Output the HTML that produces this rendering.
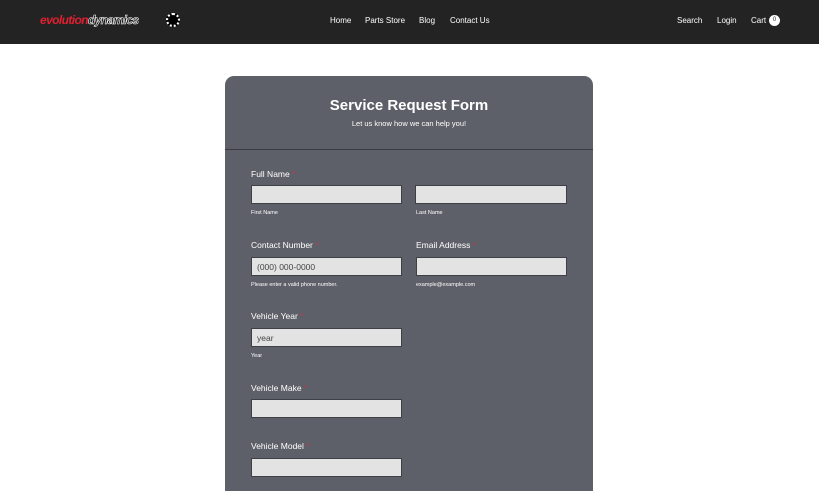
<!DOCTYPE html>
<html><head><style>
*{margin:0;padding:0;box-sizing:border-box}
html,body{width:819px;height:491px;overflow:hidden}
body{background:#fff;font-family:"Liberation Sans",sans-serif;position:relative}
.hdr{position:absolute;left:0;top:0;width:819px;height:44px;background:#232323}
.t{position:absolute;color:#fff;font-size:8px;white-space:nowrap}
.card{position:absolute;left:225px;top:76px;width:368px;height:415px;background:#5e6069;border-radius:9px 9px 0 0}
.line{position:absolute;left:225px;top:149px;width:368px;height:1px;background:#3a3b40}
.lab{position:absolute;color:#fff;font-size:8.5px}
.lab b{color:#c0394f;font-weight:normal}
.in{position:absolute;height:19px;background:#e3e3e3;border:1px solid #3f4046;font-size:8.5px;color:#444;padding:4px 5px}
.sub{position:absolute;color:#fff;font-size:5.5px}
</style></head><body>
<div class="hdr"></div>
<div class="t" style="left:40px;top:13px;font-size:12px;font-style:italic;font-weight:bold;letter-spacing:-0.6px"><span style="color:#e02030">evolution</span><span style="color:#111;-webkit-text-stroke:0.6px #fff">dynamics</span></div>
<div style="position:absolute;left:166px;top:13px;width:14px;height:14px;border-radius:50%;background:#000;border:2px dotted #fff"></div>
<div class="t" style="left:330px;top:16px">Home</div>
<div class="t" style="left:365px;top:16px">Parts Store</div>
<div class="t" style="left:419px;top:16px">Blog</div>
<div class="t" style="left:450px;top:16px">Contact Us</div>
<div class="t" style="left:677px;top:16px">Search</div>
<div class="t" style="left:717px;top:16px">Login</div>
<div class="t" style="left:751px;top:16px">Cart</div>
<div style="position:absolute;left:769px;top:15px;width:11px;height:11px;border-radius:50%;background:#fff;color:#333;font-size:6px;text-align:center;line-height:11px">0</div>
<div class="card"></div>
<div class="line"></div>
<div class="t" style="left:225px;width:368px;text-align:center;top:97px;font-size:15px;font-weight:bold">Service Request Form</div>
<div class="t" style="left:225px;width:368px;text-align:center;top:119px;font-size:7.5px">Let us know how we can help you!</div>
<div class="lab" style="left:251px;top:169px">Full Name <b>*</b></div>
<div class="in" style="left:251px;top:185px;width:151px"></div>
<div class="in" style="left:415px;top:185px;width:152px"></div>
<div class="sub" style="left:251px;top:210px">First Name</div>
<div class="sub" style="left:416px;top:210px">Last Name</div>
<div class="lab" style="left:251px;top:240px">Contact Number <b>*</b></div>
<div class="lab" style="left:416px;top:240px">Email Address <b>*</b></div>
<div class="in" style="left:251px;top:257px;width:151px">(000) 000-0000</div>
<div class="in" style="left:416px;top:257px;width:151px"></div>
<div class="sub" style="left:251px;top:282px">Please enter a valid phone number.</div>
<div class="sub" style="left:416px;top:282px">example@example.com</div>
<div class="lab" style="left:251px;top:311px">Vehicle Year <b>*</b></div>
<div class="in" style="left:251px;top:328px;width:151px">year</div>
<div class="sub" style="left:251px;top:353px">Year</div>
<div class="lab" style="left:251px;top:383px">Vehicle Make <b>*</b></div>
<div class="in" style="left:251px;top:399px;width:151px"></div>
<div class="lab" style="left:251px;top:441px">Vehicle Model <b>*</b></div>
<div class="in" style="left:251px;top:458px;width:151px"></div>
</body></html>
